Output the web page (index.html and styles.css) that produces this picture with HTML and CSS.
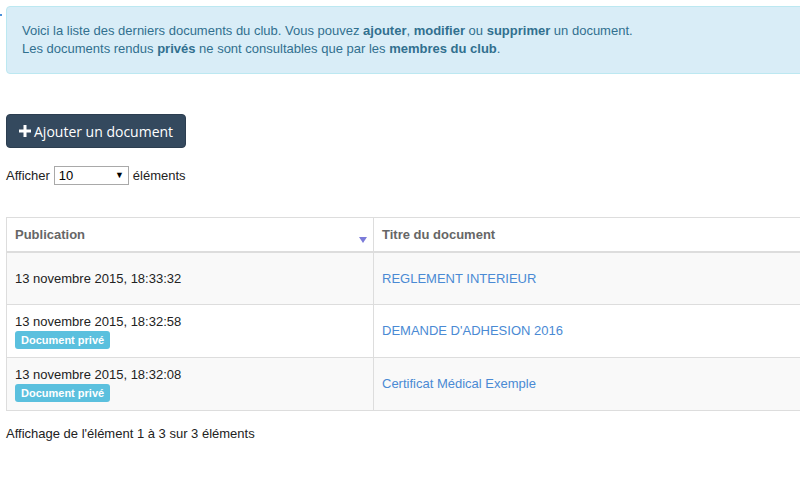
FILE: index.html
```html
<!DOCTYPE html>
<html lang="fr">

<head>
    <meta charset="UTF-8">
    <title>Documents du club</title>
    <link rel="stylesheet" href="styles.css">
</head>

<body>

    <div class="page">
        <span class="dot"></span>

        <!-- Info -->
        <div class="alert">
            Voici la liste des derniers documents du club. Vous pouvez <b>ajouter</b>, <b>modifier</b> ou <b>supprimer</b> un document.<br>
            Les documents rendus <b>privés</b> ne sont consultables que par les <b>membres du club</b>.
        </div>

        <button class="btn-add">
            <svg class="plus" width="12" height="12" viewBox="0 0 12 12"><path d="M4.5 0h3v4.5H12v3H7.5V12h-3V7.5H0v-3h4.5z" fill="#fff"/></svg>
            Ajouter un document
        </button>

        <div class="length">
            Afficher
            <span class="select-wrap">
                <select>
                    <option>10</option>
                    <option>25</option>
                    <option>50</option>
                </select>
            </span>
            éléments
        </div>

        <!-- Documents -->
        <table class="docs">
            <thead>
                <tr>
                    <th class="col-date">Publication <span class="sort"></span></th>
                    <th>Titre du document</th>
                </tr>
            </thead>
            <tbody>
                <tr>
                    <td>13 novembre 2015, 18:33:32</td>
                    <td><a href="#">REGLEMENT INTERIEUR</a></td>
                </tr>
                <tr>
                    <td>13 novembre 2015, 18:32:58<br><span class="label">Document privé</span></td>
                    <td><a href="#">DEMANDE D'ADHESION 2016</a></td>
                </tr>
                <tr>
                    <td>13 novembre 2015, 18:32:08<br><span class="label">Document privé</span></td>
                    <td><a href="#">Certificat Médical Exemple</a></td>
                </tr>
            </tbody>
        </table>

        <div class="info">Affichage de l'élément 1 à 3 sur 3 éléments</div>
    </div>

</body>

</html>
```

FILE: styles.css
```css
/* Global */
body {
    margin: 0;
    font-family: 'Liberation Sans', Arial, sans-serif;
    font-size: 13px;
    color: #222;
    background: #fff;
    overflow: hidden;
}

.page {
    position: relative;
    width: 830px;
    padding: 6px;
}

.dot {
    position: absolute;
    left: 0;
    top: 14px;
    width: 2px;
    height: 2px;
    background: #4a90d9;
}

/* Alert */
.alert {
    background: #d9edf7;
    border: 1px solid #bce8f1;
    border-radius: 4px;
    color: #31708f;
    font-size: 13px;
    line-height: 18px;
    padding: 15px;
}

.alert b {
    font-weight: bold;
}

/* Add button */
.btn-add {
    display: inline-flex;
    align-items: center;
    gap: 3px;
    margin-top: 40px;
    height: 34px;
    padding: 0 12px;
    background: #34495e;
    border: 1px solid #2c3e50;
    border-radius: 4px;
    color: #fff;
    font-family: 'Open Sans', sans-serif;
    font-size: 14px;
    cursor: pointer;
}

/* Length select */
.length {
    display: flex;
    align-items: center;
    gap: 4px;
    margin-top: 18px;
    height: 19px;
}

.select-wrap {
    position: relative;
    display: inline-block;
}

.select-wrap::after {
    content: '▼';
    position: absolute;
    right: 5px;
    top: 4px;
    font-size: 9px;
    line-height: 10px;
    color: #000;
    pointer-events: none;
}

.length select {
    appearance: none;
    -webkit-appearance: none;
    width: 75px;
    height: 19px;
    font-family: 'Liberation Sans', Arial, sans-serif;
    font-size: 13px;
    border: 1px solid #a9a9a9;
    border-radius: 0;
    padding: 0 4px;
    background: #fff;
    color: #000;
    display: block;
}

/* Table */
.docs {
    width: 100%;
    border-collapse: collapse;
    margin-top: 32px;
}

.docs th,
.docs td {
    border: 1px solid #ddd;
    padding: 8px;
    text-align: left;
    vertical-align: middle;
    line-height: 18px;
}

.docs th {
    color: #666;
    font-weight: bold;
    height: 17px;
    line-height: 17px;
    border-bottom: 2px solid #ddd;
    vertical-align: top;
}

.col-date {
    position: relative;
    width: 350px;
}

.sort {
    position: absolute;
    right: 6px;
    bottom: 8px;
    width: 0;
    height: 0;
    border-left: 4px solid transparent;
    border-right: 4px solid transparent;
    border-top: 6px solid #7b7bd9;
}

.docs td {
    height: 35px;
}

.docs tbody tr:nth-child(odd) td {
    background: #f9f9f9;
}

.docs a {
    color: #4a8ad4;
    text-decoration: none;
}

.label {
    display: inline-block;
    background: #5bc0de;
    color: #fff;
    font-size: 11px;
    font-weight: bold;
    line-height: 12px;
    padding: 3px 6px;
    border-radius: 3px;
    vertical-align: top;
}

.info {
    margin-top: 15px;
}
```
